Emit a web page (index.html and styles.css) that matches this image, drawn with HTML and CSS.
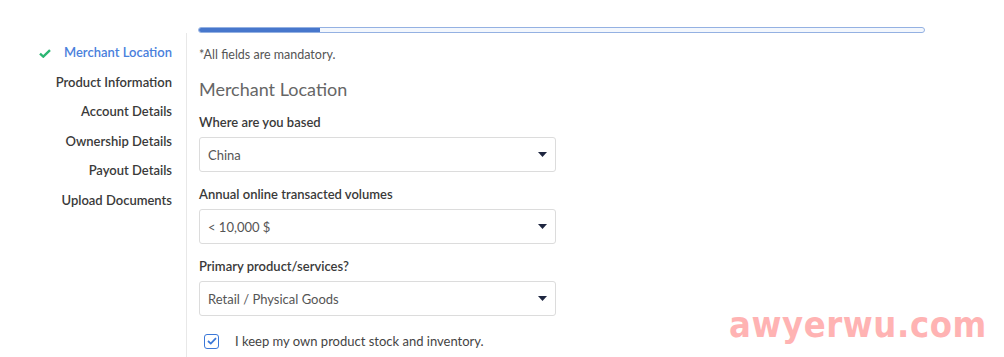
FILE: index.html
```html
<!DOCTYPE html>
<html lang="en">
<head>
  <meta charset="UTF-8">
  <meta name="viewport" content="width=device-width, initial-scale=1.0">
  <title>Merchant Location</title>
  <link rel="stylesheet" href="styles.css">
</head>
<body>
  <div class="progress-row">
    <div class="progress"><div class="progress-fill"></div></div>
  </div>

  <div class="main">
    <nav class="steps">
      <div class="step active">
        <svg class="check" width="12" height="9" viewBox="0 0 12 9"><path d="M1 4.6 L4.3 7.6 L11 1.2" fill="none" stroke="#2bb673" stroke-width="2.4"/></svg>
        Merchant Location
      </div>
      <div class="step">Product Information</div>
      <div class="step">Account Details</div>
      <div class="step">Ownership Details</div>
      <div class="step">Payout Details</div>
      <div class="step">Upload Documents</div>
    </nav>

    <section class="form">
      <p class="note">*All fields are mandatory.</p>
      <h2>Merchant Location</h2>

      <label class="field-label">Where are you based</label>
      <div class="select">
        <span>China</span>
        <svg width="9" height="5" viewBox="0 0 9 5"><path d="M0 0 H9 L4.5 5 Z" fill="#1e2640"/></svg>
      </div>

      <label class="field-label">Annual online transacted volumes</label>
      <div class="select">
        <span>&lt; 10,000 $</span>
        <svg width="9" height="5" viewBox="0 0 9 5"><path d="M0 0 H9 L4.5 5 Z" fill="#1e2640"/></svg>
      </div>

      <label class="field-label">Primary product/services?</label>
      <div class="select">
        <span>Retail / Physical Goods</span>
        <svg width="9" height="5" viewBox="0 0 9 5"><path d="M0 0 H9 L4.5 5 Z" fill="#1e2640"/></svg>
      </div>

      <div class="checkbox-row">
        <span class="checkbox">
          <svg width="10" height="8" viewBox="0 0 10 8"><path d="M1 4 L3.8 6.6 L9 1.2" fill="none" stroke="#3b78d8" stroke-width="1.8"/></svg>
        </span>
        I keep my own product stock and inventory.
      </div>
    </section>
  </div>

  <div class="watermark">awyerwu.com</div>
</body>
</html>
```

FILE: styles.css
```css
body {
  margin: 0;
  font-family: Lato, 'Open Sans', sans-serif;
  background: #fff;
  color: #333;
  height: 357px;
  overflow: hidden;
  position: relative;
}

.progress-row {
  padding: 27px 0 0 198px;
}

.progress {
  width: 725px;
  height: 4px;
  border: 1px solid #94b1e2;
  border-radius: 4px;
  background: #f3f7fd;
  overflow: hidden;
}

.progress-fill {
  width: 121px;
  height: 100%;
  background: #4777cc;
}

.main {
  display: flex;
}

.steps {
  width: 172px;
  padding: 5px 14px 0 0;
  border-right: 1px solid #e8e8e8;
  text-align: right;
  height: 330px;
}

.step {
  font-size: 13px;
  font-weight: 600;
  line-height: 29.5px;
  color: #3a3a3a;
}

.step.active {
  color: #4a80dc;
}

.check {
  margin-right: 10px;
  vertical-align: -1px;
}

.form {
  padding: 13px 0 0 12px;
  width: 357px;
}

.note {
  margin: 0;
  font-size: 12.5px;
  line-height: 18px;
  color: #555;
}

.form h2 {
  margin: 13px 0 12px;
  font-size: 18px;
  font-weight: 400;
  line-height: 24px;
  color: #666;
}

.field-label {
  display: block;
  font-size: 13px;
  font-weight: 600;
  line-height: 18px;
  color: #3a3a3a;
}

.select {
  display: flex;
  align-items: center;
  justify-content: space-between;
  height: 33px;
  margin: 6px 0 13px;
  padding: 0 8px;
  border: 1px solid #dcdcdc;
  border-radius: 3px;
  font-size: 13px;
  color: #555;
}

.checkbox-row {
  display: flex;
  align-items: center;
  margin-top: 17px;
  padding-left: 5px;
  font-size: 13px;
  color: #444;
}

.checkbox {
  width: 13px;
  height: 13px;
  border: 1px solid #3b78d8;
  border-radius: 3px;
  margin-right: 16px;
  display: flex;
  align-items: center;
  justify-content: center;
}

.watermark {
  position: absolute;
  left: 729px;
  top: 304px;
  font-family: 'DejaVu Sans Condensed', 'DejaVu Sans', sans-serif;
  font-weight: bold;
  font-size: 36px;
  letter-spacing: 0.6px;
  color: #ffb3b3;
}
```
